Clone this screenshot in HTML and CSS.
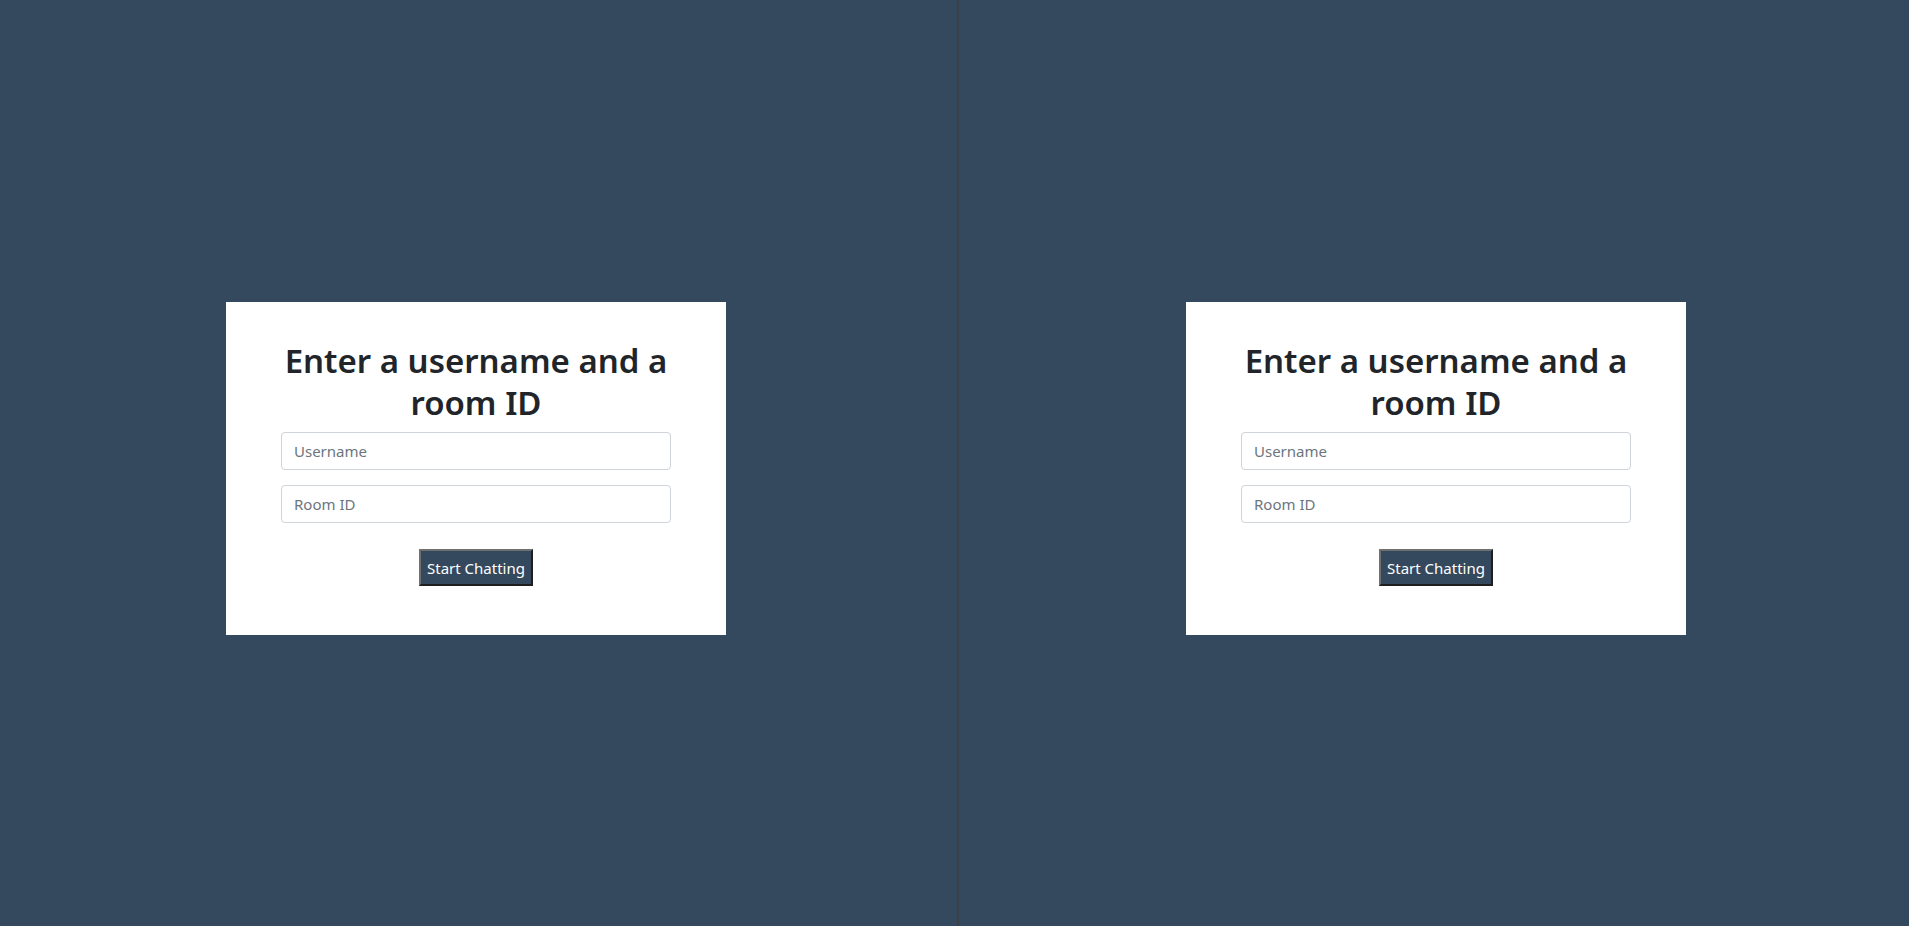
FILE: index.html
```html
<!DOCTYPE html>
<html lang="en">
<head>
<meta charset="utf-8">
<title>Chat</title>
<link rel="stylesheet" href="styles.css">
</head>
<body>
<div class="screen">
  <section class="pane pane-left">
    <div class="card">
      <h2 class="title">Enter a username and a room ID</h2>
      <form class="join-form">
        <input class="field" type="text" placeholder="Username">
        <input class="field" type="text" placeholder="Room ID">
        <div class="actions">
          <button class="btn" type="button">Start Chatting</button>
        </div>
      </form>
    </div>
  </section>
  <div class="gutter"><div class="divider"></div></div>
  <section class="pane pane-right">
    <div class="card">
      <h2 class="title">Enter a username and a room ID</h2>
      <form class="join-form">
        <input class="field" type="text" placeholder="Username">
        <input class="field" type="text" placeholder="Room ID">
        <div class="actions">
          <button class="btn" type="button">Start Chatting</button>
        </div>
      </form>
    </div>
  </section>
</div>
</body>
</html>
```

FILE: styles.css
```css
* { box-sizing: border-box; }
html, body {
  margin: 0;
  padding: 0;
  height: 100%;
  background: #34495e;
  font-family: "Noto Sans", "Open Sans", sans-serif;
  color: #212529;
}
.screen {
  display: flex;
  height: 926px;
  width: 1909px;
}
.pane {
  background: #34495e;
  display: flex;
  justify-content: center;
  align-items: center;
  padding-top: 11px;
}
.pane-left { width: 952px; }
.pane-right { flex: 1; }
.gutter {
  width: 11px;
  display: flex;
  justify-content: center;
  padding-left: 1px;
}
.divider {
  width: 2px;
  background: #3b4046;
}
.card {
  width: 500px;
  height: 333px;
  background: #ffffff;
  padding: 38px 55px 0;
}
.title {
  margin: 0 0 8px;
  font-size: 33px;
  line-height: 42px;
  font-weight: 600;
  text-align: center;
  color: #212529;
}
.join-form {
  display: flex;
  flex-direction: column;
  gap: 15px;
}
.field {
  display: block;
  width: 100%;
  height: 38px;
  padding: 6px 12px;
  font-family: inherit;
  font-size: 15px;
  color: #495057;
  border: 1px solid #ced4da;
  border-radius: 4px;
  background: #fff;
}
.field::placeholder { color: #6c757d; }
.actions {
  display: flex;
  justify-content: center;
  padding-top: 11px;
}
.btn {
  height: 37px;
  padding: 0 6px;
  background: #34495e;
  color: #ffffff;
  font-family: inherit;
  font-size: 15px;
  border-style: solid;
  border-width: 2px;
  border-color: #6f6f6f #1e1e1e #1e1e1e #6f6f6f;
  border-radius: 0;
}
```
